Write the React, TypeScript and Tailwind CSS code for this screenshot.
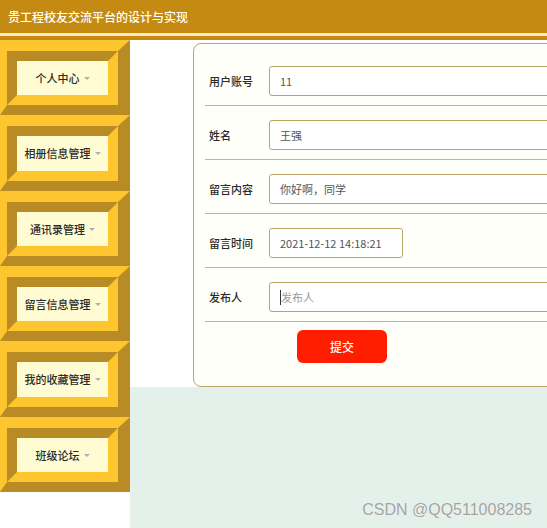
import React from "react";

const menu = ["个人中心", "相册信息管理", "通讯录管理", "留言信息管理", "我的收藏管理", "班级论坛"];

function MenuItem({ label }: { label: string }) {
  return (
    <div className="flex-1 flex border-t-[11px] border-l-[7px] border-r-[12px] border-b-[10px] border-t-[#fdc52e] border-l-[#fdc52e] border-r-[#b88b25] border-b-[#b88b25]">
      <div className="flex-1 flex border-[10px] border-t-[#b88b25] border-l-[#b88b25] border-r-[#fdc52e] border-b-[#fdc52e]">
        <div className="flex-1 bg-[#fffbd3] flex items-center justify-center text-[11px] font-medium text-[#2a2a2a]">
          <span>{label}</span>
          <span className="ml-[4px] mt-[1px] w-0 h-0 border-l-[3px] border-r-[3px] border-t-[3px] border-l-transparent border-r-transparent border-t-[#b0b0b0]" />
        </div>
      </div>
    </div>
  );
}

function Row({ label, children }: { label: string; children: React.ReactNode }) {
  return (
    <div className="flex items-center pl-[4px] pt-[14px] pb-[9px] border-b-[1.5px] border-[#cdb777]">
      <div className="w-[60px] text-[11px] font-medium text-[#2a2a2a]">{label}</div>
      {children}
    </div>
  );
}

function Input({ value, w = "w-[300px]" }: { value: string; w?: string }) {
  return (
    <div className={`${w} h-[30px] shrink-0 flex items-center pl-[10px] bg-white border border-[#bba566] rounded-[3px] text-[11px] text-[#555]`}>
      {value}
    </div>
  );
}

export default function App() {
  return (
    <div className="relative w-[547px] h-[528px] overflow-hidden bg-white font-['Noto_Sans_CJK_SC','Noto_Sans',sans-serif]">
      <div className="h-[33px] bg-[#c48a12] text-white text-[12px] font-medium flex items-center pl-[8px]">
        贵工程校友交流平台的设计与实现
      </div>
      <div className="h-[3px] bg-[#f6ecc0]" />
      <div className="h-[4px] bg-[#c48a12]" />
      <div className="flex h-[488px]">
        <aside className="w-[130px] shrink-0 flex flex-col h-[452px]">
          {menu.map((m) => (
            <MenuItem key={m} label={m} />
          ))}
        </aside>
        <main className="flex-1 flex flex-col overflow-hidden">
          <div className="bg-white pt-[3px] pl-[63px]">
            <div className="w-[420px] h-[344px] shrink-0 border border-[#bda468] rounded-[8px] bg-[#fffffa] pt-[8px] pl-[11px]">
              <Row label="用户账号">
                <Input value="11" />
              </Row>
              <Row label="姓名">
                <Input value="王强" />
              </Row>
              <Row label="留言内容">
                <Input value="你好啊，同学" />
              </Row>
              <Row label="留言时间">
                <Input value="2021-12-12 14:18:21" w="w-[134px]" />
              </Row>
              <Row label="发布人">
                <div className="w-[300px] h-[30px] shrink-0 flex items-center pl-[10px] bg-white border border-[#bba566] rounded-[3px] text-[11px] text-[#999]">
                  <span className="w-px h-[15px] bg-[#333]" />
                  <span>发布人</span>
                </div>
              </Row>
              <div className="mt-[8px] ml-[92px] w-[90px] h-[33px] rounded-[6px] bg-[#ff1e00] text-white text-[12px] font-medium flex items-center justify-center">
                提交
              </div>
            </div>
          </div>
          <div className="flex-1 bg-[#e4f0ea]" />
        </main>
      </div>
      <div className="absolute right-[15px] bottom-[9px] text-[16px] leading-[18px] text-[#a3a3a3] font-['Liberation_Sans',sans-serif] [text-shadow:0_0_1px_#fff]">
        CSDN @QQ511008285
      </div>
    </div>
  );
}
